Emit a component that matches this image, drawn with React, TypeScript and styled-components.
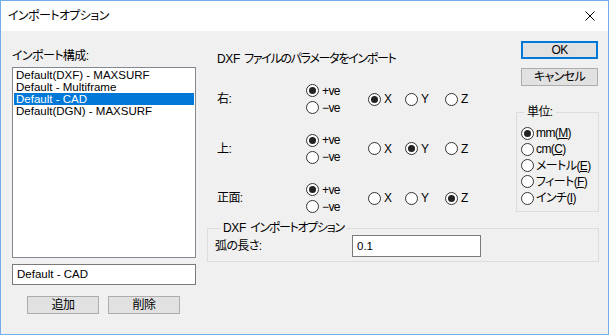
import React from "react";
import styled, { createGlobalStyle } from "styled-components";

const GlobalStyle = createGlobalStyle`
  html, body {
    margin: 0;
    padding: 0;
    background: #fff;
  }
  body {
    font-family: "Liberation Sans", "Noto Sans CJK JP", sans-serif;
    font-size: 12px;
    color: #000;
  }
  * {
    box-sizing: border-box;
  }
`;

const Window = styled.div`
  width: 609px;
  height: 335px;
  border: 1px solid #72aeea;
  background: #f0f0f0;
  display: flex;
  flex-direction: column;
  font-feature-settings: "palt";
  letter-spacing: -0.6px;
`;

const TitleBar = styled.div`
  height: 30px;
  flex-shrink: 0;
  background: #fff;
  display: flex;
  align-items: center;
  justify-content: space-between;
  padding: 0 13px 0 7px;
`;

const TitleText = styled.span`
  font-size: 12px;
  line-height: 14px;
`;

const Body = styled.div`
  flex: 1;
  display: flex;
  padding: 9px 9px 0 11px;
`;

const LeftCol = styled.div`
  width: 184px;
  flex-shrink: 0;
  display: flex;
  flex-direction: column;
`;

const FieldLabel = styled.div`
  margin-top: 9px;
  height: 14px;
  line-height: 14px;
`;

const ListBox = styled.div`
  margin-top: 4px;
  height: 191px;
  border: 1px solid #828790;
  background: #fff;
  padding: 1px;
`;

const ListItem = styled.div<{ $selected?: boolean }>`
  height: 12px;
  line-height: 12px;
  padding-left: 2px;
  font-size: 11.5px;
  letter-spacing: 0;
  white-space: nowrap;
  background: ${(p) => (p.$selected ? "#0078d7" : "transparent")};
  color: ${(p) => (p.$selected ? "#fff" : "#000")};
`;

const TextBox = styled.div<{ $width?: number; $height?: number }>`
  width: ${(p) => (p.$width ? `${p.$width}px` : "auto")};
  height: ${(p) => p.$height ?? 21}px;
  line-height: ${(p) => (p.$height ?? 21) - 2}px;
  border: 1px solid #7a7a7a;
  background: #fff;
  padding-left: 4px;
  font-size: 11.5px;
  letter-spacing: 0;
  white-space: nowrap;
`;

const NameBox = styled(TextBox)`
  margin-top: 6px;
`;

const ButtonRow = styled.div`
  margin-top: 11px;
  padding-left: 15px;
  display: flex;
  gap: 9px;
`;

const Button = styled.div<{ $width: number; $default?: boolean }>`
  width: ${(p) => p.$width}px;
  height: 18px;
  border: ${(p) => (p.$default ? "2px solid #0078d7" : "1px solid #adadad")};
  background: #e1e1e1;
  display: flex;
  align-items: center;
  justify-content: center;
  font-size: 12px;
  line-height: 14px;
`;

const Main = styled.div`
  flex: 1;
  margin-left: 11px;
  display: flex;
  flex-direction: column;
`;

const TopRow = styled.div`
  display: flex;
`;

const Params = styled.div`
  flex: 1;
`;

const ParamsHeading = styled.div`
  margin: 12px 0 0 10px;
  height: 14px;
  line-height: 14px;
  letter-spacing: -1.3px;
  white-space: nowrap;
`;

const Latin = styled.span`
  letter-spacing: -0.3px;
  margin-right: 4px;
`;

const ParamGrid = styled.div`
  margin-top: 16px;
  padding-left: 10px;
  display: grid;
  grid-template-columns: 89px 62px 37px 40px auto;
  row-gap: 15.5px;
  align-items: center;
`;

const AxisLabel = styled.div`
  line-height: 14px;
`;

const SignPair = styled.div`
  display: flex;
  flex-direction: column;
`;

const RadioItem = styled.div<{ $height: number; $gap?: number }>`
  height: ${(p) => p.$height}px;
  display: flex;
  align-items: center;
  gap: ${(p) => p.$gap ?? 3}px;
  white-space: nowrap;
  line-height: 14px;
`;

const RadioCircle = styled.span<{ $checked?: boolean }>`
  width: 13px;
  height: 13px;
  flex-shrink: 0;
  border-radius: 50%;
  border: 1px solid #333;
  background: #fff;
  display: flex;
  align-items: center;
  justify-content: center;

  &::after {
    content: "";
    width: 7px;
    height: 7px;
    border-radius: 50%;
    background: #222;
    display: ${(p) => (p.$checked ? "block" : "none")};
  }
`;

const RightCol = styled.div`
  width: 83px;
  flex-shrink: 0;
  display: flex;
  flex-direction: column;
`;

const RightButtons = styled.div`
  margin: 1px 0 0 5px;
  display: flex;
  flex-direction: column;
  gap: 9px;
`;

const GroupBox = styled.fieldset<{ $pad: string }>`
  margin: 0;
  min-width: 0;
  border: 1px solid #dcdcdc;
  padding: ${(p) => p.$pad};
`;

const GroupLegend = styled.legend<{ $offset: number; $tight?: boolean }>`
  margin-left: ${(p) => p.$offset}px;
  padding: 0 3px;
  line-height: 14px;
  height: 14px;
  letter-spacing: ${(p) => (p.$tight ? "-1.3px" : "inherit")};
  white-space: nowrap;
`;

const UnitBox = styled(GroupBox)`
  margin-top: 19px;
`;

const ImportBox = styled(GroupBox)`
  margin-top: 6px;
`;

const OptionRow = styled.div`
  display: flex;
  align-items: center;
`;

const OptionLabel = styled.div`
  width: 137px;
  line-height: 14px;
`;

const CloseIcon = () => (
  <svg width="10" height="10" viewBox="0 0 10 10">
    <path d="M0.5 0.5 L9.5 9.5 M9.5 0.5 L0.5 9.5" stroke="#000" strokeWidth="1" fill="none" />
  </svg>
);

type Axis = "X" | "Y" | "Z";

const rows: { label: string; axis: Axis }[] = [
  { label: "右:", axis: "X" },
  { label: "上:", axis: "Y" },
  { label: "正面:", axis: "Z" },
];

const configs = ["Default(DXF) - MAXSURF", "Default - Multiframe", "Default - CAD", "Default(DGN) - MAXSURF"];

const units: { text: string; key: string; checked?: boolean }[] = [
  { text: "mm", key: "M", checked: true },
  { text: "cm", key: "C" },
  { text: "メートル", key: "E" },
  { text: "フィート", key: "F" },
  { text: "インチ", key: "I" },
];

export default function App() {
  return (
    <>
      <GlobalStyle />
      <Window>
        <TitleBar>
          <TitleText>インポートオプション</TitleText>
          <CloseIcon />
        </TitleBar>
        <Body>
          <LeftCol>
            <FieldLabel>インポート構成:</FieldLabel>
            <ListBox>
              {configs.map((c) => (
                <ListItem key={c} $selected={c === "Default - CAD"}>
                  {c}
                </ListItem>
              ))}
            </ListBox>
            <NameBox>Default - CAD</NameBox>
            <ButtonRow>
              <Button $width={72}>追加</Button>
              <Button $width={72}>削除</Button>
            </ButtonRow>
          </LeftCol>

          <Main>
            <TopRow>
              <Params>
                <ParamsHeading>
                  <Latin>DXF</Latin>ファイルのパラメータをインポート
                </ParamsHeading>
                <ParamGrid>
                  {rows.map((r) => (
                    <React.Fragment key={r.label}>
                      <AxisLabel>{r.label}</AxisLabel>
                      <SignPair>
                        <RadioItem $height={17}>
                          <RadioCircle $checked />
                          +ve
                        </RadioItem>
                        <RadioItem $height={17}>
                          <RadioCircle />
                          −ve
                        </RadioItem>
                      </SignPair>
                      {(["X", "Y", "Z"] as Axis[]).map((a) => (
                        <RadioItem key={a} $height={17}>
                          <RadioCircle $checked={a === r.axis} />
                          {a}
                        </RadioItem>
                      ))}
                    </React.Fragment>
                  ))}
                </ParamGrid>
              </Params>

              <RightCol>
                <RightButtons>
                  <Button $width={77} $default>
                    OK
                  </Button>
                  <Button $width={77}>キャンセル</Button>
                </RightButtons>
                <UnitBox $pad="6px 0 5px 4px">
                  <GroupLegend $offset={3}>単位:</GroupLegend>
                  {units.map((u) => (
                    <RadioItem key={u.key} $height={16.25} $gap={2}>
                      <RadioCircle $checked={u.checked} />
                      <span>
                        {u.text}(<u>{u.key}</u>)
                      </span>
                    </RadioItem>
                  ))}
                </UnitBox>
              </RightCol>
            </TopRow>

            <ImportBox $pad="0 0 4px 7px">
              <GroupLegend $offset={5} $tight>
                <Latin>DXF</Latin>インポートオプション
              </GroupLegend>
              <OptionRow>
                <OptionLabel>弧の長さ:</OptionLabel>
                <TextBox $width={129} $height={22}>
                  0.1
                </TextBox>
              </OptionRow>
            </ImportBox>
          </Main>
        </Body>
      </Window>
    </>
  );
}
